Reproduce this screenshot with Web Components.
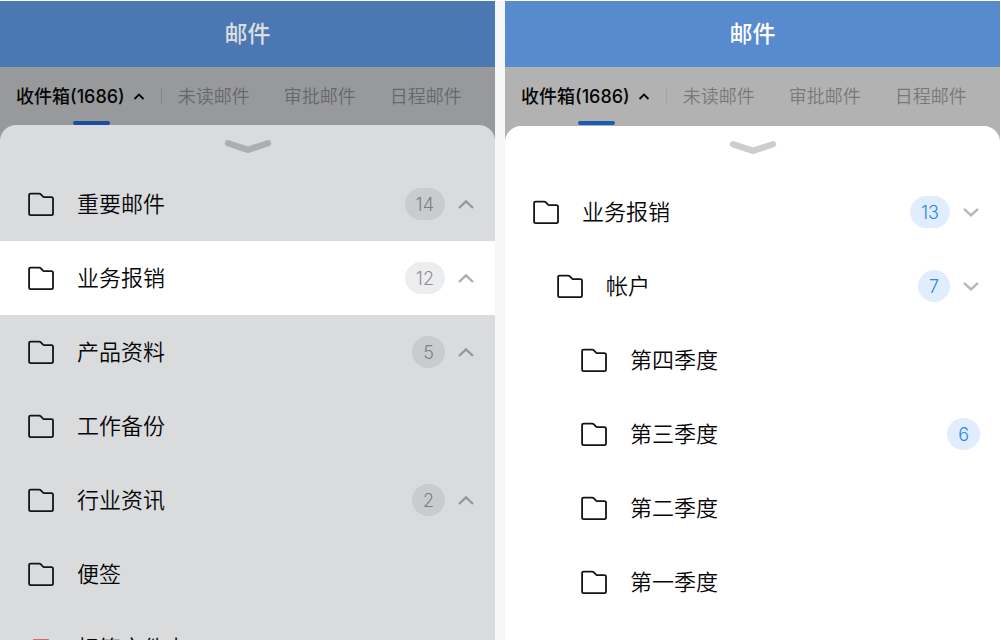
<!DOCTYPE html>
<html lang="zh-CN">
<head>
<meta charset="utf-8">
<meta name="viewport" content="width=device-width, initial-scale=1">
<title>邮件</title>
<style>
html, body { height: 100%; margin: 0; }
body { background: #fff; font-family: Inter, "Noto Sans CJK SC", sans-serif; color: #060607; }
</style>
</head>
<body>
<mail-board>
  <mail-screen class="dim" heading="邮件">
    <mail-tabs slot="tabs" label="收件箱(1686)"></mail-tabs>
    <folder-row count="14" arrow="up">重要邮件</folder-row>
    <folder-row count="12" arrow="up" selected>业务报销</folder-row>
    <folder-row count="5" arrow="up">产品资料</folder-row>
    <folder-row>工作备份</folder-row>
    <folder-row count="2" arrow="up">行业资讯</folder-row>
    <folder-row>便签</folder-row>
    <folder-row icon="tag">标签文件夹</folder-row>
  </mail-screen>
  <mail-screen class="bright" heading="邮件">
    <mail-tabs slot="tabs" label="收件箱(1686)"></mail-tabs>
    <folder-row count="13" arrow="down">业务报销</folder-row>
    <folder-row count="7" arrow="down" level="1">帐户</folder-row>
    <folder-row level="2">第四季度</folder-row>
    <folder-row level="2" count="6">第三季度</folder-row>
    <folder-row level="2">第二季度</folder-row>
    <folder-row level="2">第一季度</folder-row>
  </mail-screen>
</mail-board>

<script>
class MailBoard extends HTMLElement {
  constructor() {
    super();
    this.attachShadow({ mode: 'open' }).innerHTML = `
      <style>
        :host { display: block; box-sizing: border-box; height: 100vh; padding: 1px 1px 0 0; overflow: hidden; }
        main { display: grid; grid-template-columns: 1fr 1fr; gap: 10px; height: 100%; background: #f4f6f8; }
        ::slotted(mail-screen.dim) {
          --bar: #4b78b2; --title: #dcdee0; --tabs: #98999b; --muted: #66686b; --rule: #85878a;
          --accent: #1b4f9c; --sheet: #dadbdd; --handle: #abafb2; --badge: #c9ccce;
          --badge-text: #7c8083; --arrow: #96989b; --sheet-gap: 0px; --list-gap: 42px;
        }
        ::slotted(mail-screen.bright) {
          --bar: #588bcd; --title: #fff; --tabs: #b2b2b2; --muted: #77797b; --rule: #a2a4a6;
          --accent: #1c5bb3; --sheet: #fff; --handle: #cbcdcf; --badge: #e0edfd;
          --badge-text: #2e82f6; --arrow: #b4b7ba; --sheet-gap: 1px; --list-gap: 49px;
        }
      </style>
      <main><slot></slot></main>`;
  }
}

class MailScreen extends HTMLElement {
  constructor() {
    super();
    this.attachShadow({ mode: 'open' }).innerHTML = `
      <style>
        :host { display: flex; flex-direction: column; min-width: 0; min-height: 0; overflow: hidden; background: var(--tabs); }
        header { flex: none; height: 66px; display: flex; align-items: center; justify-content: center; background: var(--bar); }
        h1 { margin: 0; font-size: 23px; line-height: 32px; font-weight: 500; color: var(--title); }
        section { flex: 1; min-height: 0; margin-top: var(--sheet-gap); overflow: hidden; border-radius: 16px 16px 0 0; background: var(--sheet); }
        .handle { display: flex; justify-content: center; height: var(--list-gap); padding: 0; border: 0; width: 100%; background: none; box-sizing: border-box; align-items: flex-start; }
        svg { display: block; margin-top: 13px; }
      </style>
      <header><h1></h1></header>
      <slot name="tabs"></slot>
      <section>
        <button class="handle" type="button" aria-label="收起">
          <svg width="48" height="16" viewBox="0 0 48 16" fill="none" stroke="var(--handle)" stroke-width="6.4" stroke-linecap="round" stroke-linejoin="miter"><path d="M4 5.2 L24 11.8 L44 5.2"/></svg>
        </button>
        <nav><slot></slot></nav>
      </section>`;
  }
  connectedCallback() { this.shadowRoot.querySelector('h1').textContent = this.getAttribute('heading'); }
}

class MailTabs extends HTMLElement {
  constructor() {
    super();
    this.attachShadow({ mode: 'open' }).innerHTML = `
      <style>
        :host { display: block; flex: none; }
        nav { display: flex; align-items: center; height: 58px; padding: 0 16px; box-sizing: border-box; font-size: 18px; line-height: 24px; white-space: nowrap; }
        a { padding-top: 2px; color: var(--muted); text-decoration: none; font-weight: 350; }
        a + a { margin-left: 34px; }
        .active { position: relative; display: flex; align-items: center; gap: 8px; height: 58px; box-sizing: border-box; margin-right: 16px; padding-right: 17px; color: #060607; font-weight: 500; }
        .active::before { content: ""; position: absolute; right: 0; top: 21px; width: 1px; height: 16px; background: var(--rule); }
        .active::after { content: ""; position: absolute; left: 57px; bottom: 0; width: 37px; height: 4px; border-radius: 2px; background: var(--accent); }
        .active + a { margin-left: 0; }
      </style>
      <nav>
        <a class="active" href="#inbox" aria-current="page"><span></span><svg width="12" height="8" viewBox="0 0 12 8" fill="none" stroke="currentColor" stroke-width="1.8"><path d="M1.5 6 L6 1.5 L10.5 6"/></svg></a>
        <a href="#unread">未读邮件</a>
        <a href="#approval">审批邮件</a>
        <a href="#schedule">日程邮件</a>
      </nav>`;
  }
  connectedCallback() { this.shadowRoot.querySelector('span').textContent = this.getAttribute('label'); }
}

const folderIcon = '<svg width="28" height="26" viewBox="0 0 28 26" fill="none" stroke="#141518" stroke-width="1.8" stroke-linejoin="round"><path d="M3.7 2.6 H12.2 Q13.2 2.6 13.9 3.3 L16 5.6 Q16.6 6.2 17.6 6.2 H24.4 Q26 6.2 26 7.8 V22.6 Q26 24.2 24.4 24.2 H3.7 Q2.1 24.2 2.1 22.6 V4.2 Q2.1 2.6 3.7 2.6 Z"/></svg>';
const tagIcon = '<svg width="28" height="26" viewBox="0 0 28 26" fill="none" stroke="#d3696d" stroke-width="2" stroke-linejoin="round"><path d="M7 5 H21 L24 8 V24 H4 V8 Z"/></svg>';

class FolderRow extends HTMLElement {
  constructor() {
    super();
    this.attachShadow({ mode: 'open' });
  }
  connectedCallback() {
    const count = this.getAttribute('count');
    const arrow = this.getAttribute('arrow');
    const level = Number(this.getAttribute('level') || 0);
    this.shadowRoot.innerHTML = `
      <style>
        :host { display: block; }
        :host([selected]) { background: #fff; --badge: #ecedef; --badge-text: #8c9093; --arrow: #aaacaf; }
        a { display: flex; align-items: center; height: 74px; padding: 0 20px 0 calc(27px + 24px * ${level}); box-sizing: border-box; color: inherit; text-decoration: none; }
        svg { display: block; flex: none; }
        .name { flex: 1; margin-left: 22px; font-size: 22px; line-height: 32px; font-weight: 350; }
        .count { min-width: 32px; height: 32px; padding: 0 11px; box-sizing: border-box; border-radius: 16px; background: var(--badge); color: var(--badge-text); font-size: 18px; line-height: 34px; font-weight: 350; text-align: center; }
        .arrow { margin-left: 12px; }
      </style>
      <a href="#folder">
        ${this.getAttribute('icon') === 'tag' ? tagIcon : folderIcon}
        <span class="name"><slot></slot></span>
        ${count ? `<span class="count">${count}</span>` : ''}
        ${arrow ? `<svg class="arrow" width="18" height="12" viewBox="0 0 18 12" fill="none" stroke="var(--arrow)" stroke-width="2.4"><path d="${arrow === 'up' ? 'M2 10 L9 3.4 L16 10' : 'M2 2.8 L9 9.4 L16 2.8'}"/></svg>` : ''}
      </a>`;
  }
}

customElements.define('mail-board', MailBoard);
customElements.define('mail-screen', MailScreen);
customElements.define('mail-tabs', MailTabs);
customElements.define('folder-row', FolderRow);
</script>
</body>
</html>
